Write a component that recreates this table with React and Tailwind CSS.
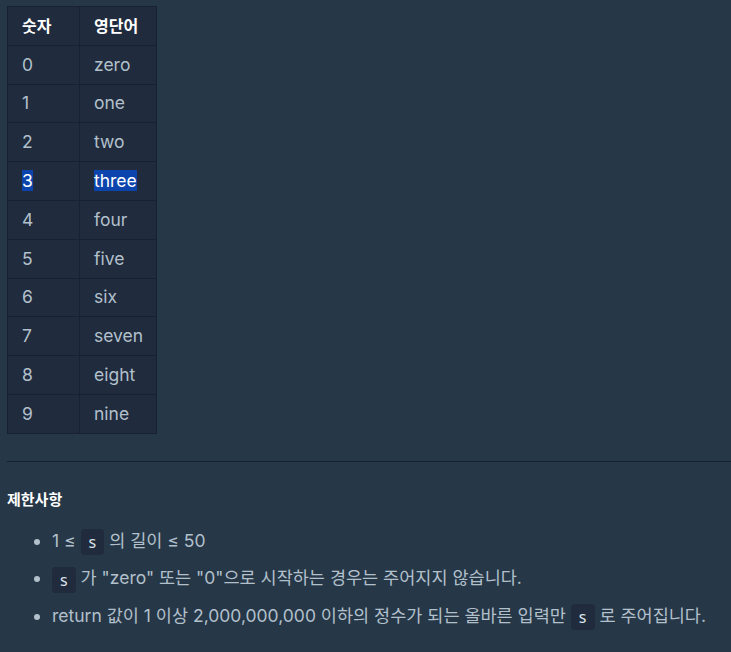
import React from 'react';

const words = ['zero', 'one', 'two', 'three', 'four', 'five', 'six', 'seven', 'eight', 'nine'];

const Code = ({ children }) => (
    <code
        className="inline-block rounded-[4px] bg-[#202b3d] px-[8px] leading-[26px] text-[16px] text-[#dbe2ea] align-middle"
        style={{ fontFamily: '"Noto Sans", sans-serif' }}
    >
        {children}
    </code>
);

const App = () => {
    return (
        <div
            className="min-h-[652px] bg-[#263747] text-[#b2c0cc] text-[17.5px] pt-[6px] pl-[7px]"
            style={{ fontFamily: 'Inter, "Noto Sans CJK KR", sans-serif' }}
        >
            <table className="border-collapse bg-[#202b3d]">
                <thead>
                    <tr className="h-[38.8px]">
                        <th className="w-[72px] border border-[#172130] pl-[14px] text-left text-[16px] font-bold text-white">숫자</th>
                        <th className="w-[77px] border border-[#172130] pl-[14px] text-left text-[16px] font-bold text-white">영단어</th>
                    </tr>
                </thead>
                <tbody>
                    {words.map((w, i) => (
                        <tr key={w} className="h-[38.8px]">
                            <td className="border border-[#172130] pl-[14px]">
                                {i === 3 ? <span className="bg-[#0b44ad] text-white">{i}</span> : i}
                            </td>
                            <td className="border border-[#172130] pl-[14px]">
                                {i === 3 ? <span className="bg-[#0b44ad] text-white">{w}</span> : w}
                            </td>
                        </tr>
                    ))}
                </tbody>
            </table>

            <hr className="mt-[27px] border-0 border-t border-[#172130]" />

            <h5 className="mt-[27px] text-[15px] font-bold text-white">제한사항</h5>

            <ul className="mt-[17px] list-disc pl-[45px] space-y-[10px] marker:text-[#b2c0cc]">
                <li className="leading-[26px]">1 ≤ <Code>s</Code> 의 길이 ≤ 50</li>
                <li className="leading-[26px]"><Code>s</Code> 가 "zero" 또는 "0"으로 시작하는 경우는 주어지지 않습니다.</li>
                <li className="leading-[26px]">return 값이 1 이상 2,000,000,000 이하의 정수가 되는 올바른 입력만 <Code>s</Code> 로 주어집니다.</li>
            </ul>
        </div>
    );
};

export default App;
